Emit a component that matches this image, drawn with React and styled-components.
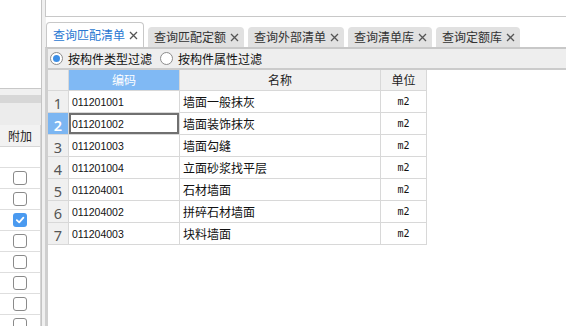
import React from 'react';
import styled, { createGlobalStyle } from 'styled-components';

const GlobalStyle = createGlobalStyle`
    html, body {
        margin: 0;
        padding: 0;
    }
    body {
        background: #f0f0f0;
        font-family: "Noto Sans CJK SC", "Noto Sans", sans-serif;
        overflow: hidden;
    }
`;

const Screen = styled.div`
    width: 566px;
    height: 326px;
    display: flex;
    gap: 3px;
    background: #f0f0f0;
    overflow: hidden;
`;

const LeftPanel = styled.div`
    width: 42px;
    flex-shrink: 0;
    display: flex;
    flex-direction: column;
    box-sizing: border-box;
    border-right: 1px solid #c4c4c4;
    overflow: hidden;
`;
const LeftTop = styled.div`
    height: 89px;
    flex-shrink: 0;
    box-sizing: border-box;
    background: #fff;
    border-bottom: 1px solid #c8c8c8;
`;
const LeftBar = styled.div`
    height: 8px;
    flex-shrink: 0;
    margin-top: 6px;
    background: #d7d7d7;
`;
const LeftSpacer = styled.div`
    height: 22px;
    flex-shrink: 0;
    background: #ececec;
`;
const AttachCol = styled.div`
    width: 40px;
    flex: 1;
    min-height: 0;
    overflow: hidden;
    background: #fff;
    border-right: 1px solid #d6d6d6;
`;
const AttachHead = styled.div`
    height: 22px;
    box-sizing: border-box;
    border-bottom: 1px solid #d6d6d6;
    background: #f2f2f2;
    display: flex;
    align-items: center;
    justify-content: center;
    font-size: 12px;
    line-height: 12px;
    color: #222;
`;
const AttachRow = styled.div`
    height: 21px;
    box-sizing: border-box;
    border-bottom: 1px solid #dedede;
    display: flex;
    align-items: center;
    justify-content: center;
`;
const CheckBox = styled.div`
    width: 14px;
    height: 14px;
    box-sizing: border-box;
    border-radius: 3px;
    border: ${p => (p.$checked ? 'none' : '1.5px solid #8a8a8a')};
    background: ${p => (p.$checked ? '#4a9af0' : '#fff')};
    display: flex;
    align-items: center;
    justify-content: center;
`;

const RightPanel = styled.div`
    flex: 1;
    display: flex;
    flex-direction: column;
    min-width: 0;
`;
const RightTop = styled.div`
    height: 17px;
    flex-shrink: 0;
    box-sizing: border-box;
    background: #fff;
    border-left: 1px solid #c8c8c8;
    border-bottom: 1px solid #c8c8c8;
`;
const TabStrip = styled.div`
    height: 30px;
    flex-shrink: 0;
    margin-left: 1px;
    background: #fff;
    display: flex;
    align-items: flex-end;
    gap: 4px;
`;
const Tab = styled.div`
    height: ${p => (p.$active ? '25px' : '20px')};
    box-sizing: border-box;
    padding: 0 5px 0 6px;
    display: flex;
    align-items: center;
    gap: 4px;
    border-radius: 4px 4px 0 0;
    background: ${p => (p.$active ? '#fff' : '#e1e1e1')};
    border: ${p => (p.$active ? '1px solid #c8c8c8' : 'none')};
    border-bottom: none;
    color: ${p => (p.$active ? '#2a78d2' : '#333')};
    font-size: 12px;
    line-height: 12px;
    white-space: nowrap;
`;
const Pane = styled.div`
    flex: 1;
    background: #fff;
    border-top: 2px solid #c8c8c8;
    border-left: 3px solid #cfcfcf;
    display: flex;
    flex-direction: column;
`;
const FilterBar = styled.div`
    height: 21px;
    flex-shrink: 0;
    box-sizing: border-box;
    background: #eeeeee;
    border-bottom: 2px solid #cbcbcb;
    padding-left: 2px;
    display: flex;
    align-items: center;
    gap: 8px;
`;
const RadioItem = styled.label`
    display: flex;
    align-items: center;
    gap: 5px;
    font-size: 12px;
    line-height: 12px;
    color: #111;
`;
const Radio = styled.span`
    width: 13px;
    height: 13px;
    box-sizing: border-box;
    border-radius: 50%;
    border: 1px solid #8c8c8c;
    background: #fff;
    display: flex;
    align-items: center;
    justify-content: center;
    &::after {
        content: '';
        width: 7px;
        height: 7px;
        border-radius: 50%;
        background: ${p => (p.$checked ? '#3d8fe6' : 'transparent')};
    }
`;

const Grid = styled.div`
    display: grid;
    grid-template-columns: 21px 111px 201px 46px;
    width: 379px;
`;
const Cell = styled.div`
    height: ${p => (p.$head ? '21px' : '22px')};
    box-sizing: border-box;
    border-right: 1px solid #d8d8d8;
    border-bottom: 1px solid #d8d8d8;
    display: flex;
    align-items: center;
    padding-left: 3px;
    background: #fff;
    color: #111;
    font-size: 12px;
    line-height: 12px;
    white-space: nowrap;
`;
const HeadCell = styled(Cell)`
    justify-content: center;
    padding-left: 0;
    background: ${p => (p.$active ? '#80b9f4' : '#f0f0f0')};
    color: ${p => (p.$active ? '#fff' : '#222')};
`;
const NumCell = styled(Cell)`
    justify-content: center;
    padding-left: 0;
    padding-top: 2px;
    background: ${p => (p.$selected ? '#7cb6f2' : '#f0f0f0')};
    color: ${p => (p.$selected ? '#fff' : '#555')};
    font-family: "Noto Sans", sans-serif;
    font-size: 14.5px;
    font-weight: ${p => (p.$selected ? 600 : 400)};
`;
const CodeCell = styled(Cell)`
    font-family: "Liberation Sans", Arial, sans-serif;
    font-size: 10.5px;
    box-shadow: ${p => (p.$focused ? 'inset 0 0 0 2px #707070' : 'none')};
`;
const UnitCell = styled(Cell)`
    justify-content: center;
    padding-left: 0;
    font-family: "DejaVu Sans Mono", monospace;
    font-size: 10px;
`;

const tabs = [
    { label: '查询匹配清单', active: true },
    { label: '查询匹配定额' },
    { label: '查询外部清单' },
    { label: '查询清单库' },
    { label: '查询定额库' },
];

const items = [
    { code: '011201001', name: '墙面一般抹灰' },
    { code: '011201002', name: '墙面装饰抹灰' },
    { code: '011201003', name: '墙面勾缝' },
    { code: '011201004', name: '立面砂浆找平层' },
    { code: '011204001', name: '石材墙面' },
    { code: '011204002', name: '拼碎石材墙面' },
    { code: '011204003', name: '块料墙面' },
];

const attachRows = [null, false, false, true, false, false, false, false, false];

const CloseIcon = () => (
    <svg width="9" height="9" viewBox="0 0 9 9">
        <path d="M1 1 L8 8 M8 1 L1 8" stroke="#555" strokeWidth="1.3" fill="none" />
    </svg>
);

const CheckIcon = () => (
    <svg width="10" height="10" viewBox="0 0 10 10">
        <path d="M1.8 5.2 L4.2 7.4 L8.4 2.6" stroke="#fff" strokeWidth="1.8" fill="none" strokeLinecap="round" strokeLinejoin="round" />
    </svg>
);

const App = () => {
    const selectedRow = 1;
    return (
        <Screen>
            <GlobalStyle />
            <LeftPanel>
                <LeftTop />
                <LeftBar />
                <LeftSpacer />
                <AttachCol>
                    <AttachHead>附加</AttachHead>
                    {attachRows.map((checked, index) => (
                        <AttachRow key={index}>
                            {checked !== null && (
                                <CheckBox $checked={checked}>{checked && <CheckIcon />}</CheckBox>
                            )}
                        </AttachRow>
                    ))}
                </AttachCol>
            </LeftPanel>
            <RightPanel>
                <RightTop />
                <TabStrip>
                    {tabs.map(tab => (
                        <Tab key={tab.label} $active={tab.active}>
                            {tab.label}
                            <CloseIcon />
                        </Tab>
                    ))}
                </TabStrip>
                <Pane>
                    <FilterBar>
                        <RadioItem>
                            <Radio $checked />
                            按构件类型过滤
                        </RadioItem>
                        <RadioItem>
                            <Radio />
                            按构件属性过滤
                        </RadioItem>
                    </FilterBar>
                    <Grid>
                        <HeadCell $head />
                        <HeadCell $head $active>编码</HeadCell>
                        <HeadCell $head>名称</HeadCell>
                        <HeadCell $head>单位</HeadCell>
                        {items.map((item, index) => (
                            <React.Fragment key={item.code}>
                                <NumCell $selected={index === selectedRow}>{index + 1}</NumCell>
                                <CodeCell $focused={index === selectedRow}>{item.code}</CodeCell>
                                <Cell>{item.name}</Cell>
                                <UnitCell>m2</UnitCell>
                            </React.Fragment>
                        ))}
                    </Grid>
                </Pane>
            </RightPanel>
        </Screen>
    );
};

export default App;
